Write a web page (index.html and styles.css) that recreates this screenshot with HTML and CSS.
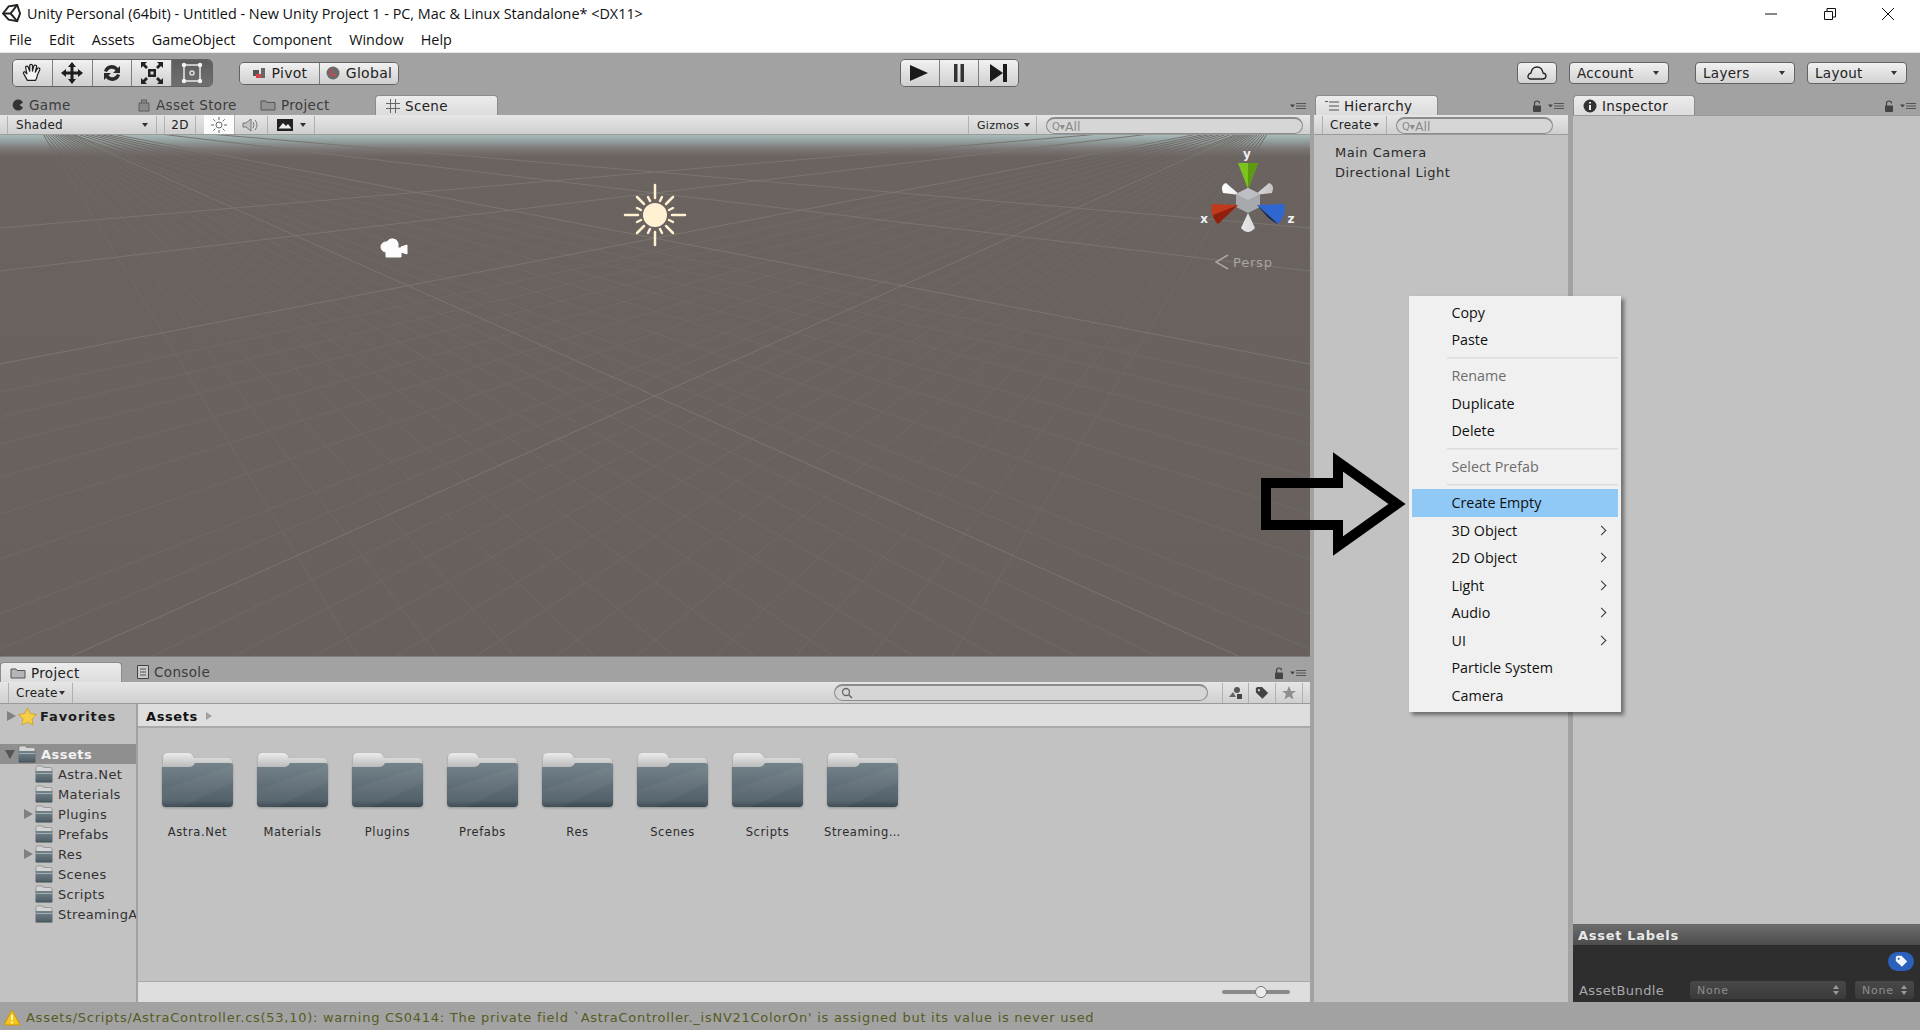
FILE: index.html
```html
<!DOCTYPE html>
<html lang="en">
<head>
    <meta charset="UTF-8">
    <title>Unity Personal (64bit) - Untitled - New Unity Project 1</title>
    <link rel="stylesheet" href="styles.css">
</head>
<body>
    <!-- shared icons -->
    <svg class="sprite" width="0" height="0">
        <defs>
            <linearGradient id="folderBody" x1="0" y1="0" x2="0" y2="1">
                <stop offset="0" stop-color="#74828a"/>
                <stop offset="0.85" stop-color="#53616a"/>
                <stop offset="1" stop-color="#3b4850"/>
            </linearGradient>
            <linearGradient id="folderPaper" x1="0" y1="0" x2="0" y2="1">
                <stop offset="0" stop-color="#ececec"/>
                <stop offset="1" stop-color="#b0b0b0"/>
            </linearGradient>
            <symbol id="folderBig" viewBox="0 0 71 56">
                <path d="M1 14V6q0-5 5-5h20q4 0 6 5h34q4 0 4 4v8H1z" fill="url(#folderPaper)"/>
                <path d="M0 15h27q4 0 6-4h35q3 0 3 3v37q0 4-4 4H4q-4 0-4-4z" fill="url(#folderBody)"/>
                <path d="M0 38 L71 13V30L20 55H4q-4 0-4-4z" fill="#fff" opacity="0.04"/>
            </symbol>
            <symbol id="folderSmall" viewBox="0 0 18 18">
                <path d="M1 6V2.500Q1 1 2.500 1h4.500q1 0 1.500 1.500h7Q17 2.500 17 4v3H1z" fill="#d4d4d4" stroke="#777" stroke-width="0.6"/>
                <path d="M0.500 6h17v10.500q0 1-1 1h-15q-1 0-1-1z" fill="url(#folderBody)"/>
                <path d="M1 8.500h16" stroke="#b4bcc0" stroke-width="0.8"/>
            </symbol>
            <symbol id="lock" viewBox="0 0 10 12">
                <path d="M2.500 6V3.500a2.500 2.500 0 0 1 5 0" fill="none" stroke="#444" stroke-width="1.200"/>
                <rect x="1" y="5.500" width="8" height="6.500" rx="0.800" fill="#444"/>
            </symbol>
            <symbol id="paneMenu" viewBox="0 0 16 8">
                <path d="M0 2.500h5L2.500 5.500z" fill="#444"/>
                <path d="M6 1.500h10M6 4h10M6 6.500h10" stroke="#555" stroke-width="1"/>
            </symbol>
            <symbol id="tag" viewBox="0 0 16 16">
                <path d="M1 2.500 2.500 1H8l7 7-6.500 6.500L1 7.500zM4.500 3.500a1.200 1.200 0 1 0 .01 0z" fill-rule="evenodd"/>
            </symbol>
            <symbol id="updown" viewBox="0 0 6 10">
                <path d="M3 0 6 4H0zM3 10 0 6h6z" fill="#9a9a9a"/>
            </symbol>
        </defs>
    </svg>

    <header class="titlebar">
        <svg class="unity-logo" viewBox="0 0 20 20" width="19" height="19">
            <path d="M1 10 7 2.500l9-1.500 3 9-3 8-9-1.500z" fill="none" stroke="#222" stroke-width="2"/>
            <path d="M1 10h8l7-9M9 10l7 8" fill="none" stroke="#222" stroke-width="2"/>
        </svg>
        <span class="title-text">Unity Personal (64bit) - Untitled - New Unity Project 1 - PC, Mac &amp; Linux Standalone* &lt;DX11&gt;</span>
        <div class="window-controls">
            <svg viewBox="0 0 12 12" width="12" height="12"><path d="M0 6h12" stroke="#111" stroke-width="1"/></svg>
            <svg viewBox="0 0 12 12" width="12" height="12"><path d="M.5 3.500h8v8h-8zM3 3.500V.5h8.500V9H8.500" fill="none" stroke="#111" stroke-width="1"/></svg>
            <svg viewBox="0 0 12 12" width="12" height="12"><path d="M0 0l12 12M12 0 0 12" stroke="#111" stroke-width="1"/></svg>
        </div>
    </header>

    <nav class="menubar">
        <span>File</span><span>Edit</span><span>Assets</span><span>GameObject</span><span>Component</span><span>Window</span><span>Help</span>
    </nav>

    <!-- main toolbar -->
    <div class="toolbar">
        <div class="toolbar-left">
            <div class="btn-group tools">
                <button class="tool-btn">
                    <svg viewBox="0 0 24 24" width="22" height="22"><path d="M7 20 3 13q-1-2 1-2.500l2.500 2.500L5 6q0-1.500 1.500-1.500T8 6l1.500 4V4q0-1.500 1.500-1.500T12.500 4v6L14 4.500q.5-1.500 2-1T17 5l-1.500 6 2.500-4q1-1 2-.3t.5 1.800L18 14q-1 4-2 6z" fill="#f4f4f4" stroke="#222" stroke-width="1.300" stroke-linejoin="round"/></svg>
                </button>
                <button class="tool-btn">
                    <svg viewBox="0 0 24 24" width="24" height="24"><path d="M12 1l4 5h-2.500v4.500H18V8l5 4-5 4v-2.500h-4.500V18H16l-4 5-4-5h2.500v-4.500H6V16l-5-4 5-4v2.500h4.500V6H8z" fill="#1d1d1d"/></svg>
                </button>
                <button class="tool-btn">
                    <svg viewBox="0 0 24 24" width="24" height="24"><path d="M4 10a8 8 0 0 1 14-3l2-2v7h-7l2.500-2.500A5 5 0 0 0 7 11zM20 14a8 8 0 0 1-14 3l-2 2v-7h7l-2.500 2.500A5 5 0 0 0 17 13z" fill="#2a2a2a"/></svg>
                </button>
                <button class="tool-btn">
                    <svg viewBox="0 0 24 24" width="24" height="24"><path d="M8 8h8v8H8zM10.500 10.500v3h3v-3z" fill="#222" fill-rule="evenodd"/><path d="M1 7V1h6L5 3l3 3-2 2-3-3zM23 7V1h-6l2 2-3 3 2 2 3-3zM1 17v6h6l-2-2 3-3-2-2-3 3zM23 17v6h-6l2-2-3-3 2-2 3 3z" fill="#222"/></svg>
                </button>
                <button class="tool-btn tool-on">
                    <svg viewBox="0 0 24 24" width="24" height="24"><path d="M4 4h16v16H4z" fill="none" stroke="#e8e8e8" stroke-width="1.500"/><circle cx="12" cy="12" r="2" fill="none" stroke="#ddd" stroke-width="1.500"/><circle cx="4" cy="4" r="2.200" fill="#f4f4f4"/><circle cx="20" cy="4" r="2.200" fill="#f4f4f4"/><circle cx="4" cy="20" r="2.200" fill="#f4f4f4"/><circle cx="20" cy="20" r="2.200" fill="#f4f4f4"/></svg>
                </button>
            </div>
            <div class="btn-group pivot">
                <button class="text-btn btn-pivot">
                    <svg viewBox="0 0 14 14" width="14" height="14"><path d="M1 4h6v6H1z" fill="#555"/><path d="M9 2h4v10H9z" fill="#666"/><path d="M4 8h5v4H4z" fill="#d8404a"/></svg>
                    Pivot
                </button>
                <button class="text-btn btn-global">
                    <svg viewBox="0 0 14 14" width="14" height="14"><circle cx="7" cy="7" r="6.500" fill="#6b6b6b"/><path d="M5 3v6h5" fill="none" stroke="#d8404a" stroke-width="1.600"/></svg>
                    Global
                </button>
            </div>
        </div>
        <div class="btn-group play">
            <button class="play-btn"><svg viewBox="0 0 20 20" width="20" height="20"><path d="M0 2l18 8-18 8z" fill="#1a1a1a"/></svg></button>
            <button class="play-btn"><svg viewBox="0 0 20 20" width="20" height="20"><path d="M5 1h3.500v18H5zM11.500 1H15v18h-3.500z" fill="#333"/></svg></button>
            <button class="play-btn"><svg viewBox="0 0 20 20" width="20" height="20"><path d="M1 1l13 9-13 9zM14 1h4v18h-4z" fill="#1a1a1a"/></svg></button>
        </div>
        <div class="toolbar-right">
            <button class="plain-btn btn-cloud">
                <svg viewBox="0 0 20 16" width="20" height="16"><path d="M3 14q-2.500-.5-2-3t3-3q1-6 6-6t6 6q3 .5 3 3t-3 3z" fill="none" stroke="#222" stroke-width="1.300"/></svg>
            </button>
            <button class="plain-btn drop-btn btn-account">Account<i class="caret"></i></button>
            <button class="plain-btn drop-btn btn-layers">Layers<i class="caret"></i></button>
            <button class="plain-btn drop-btn btn-layout">Layout<i class="caret"></i></button>
        </div>
    </div>

    <main class="workspace">
        <div class="left-column">
            <!-- scene -->
            <section class="scene-panel">
                <div class="tabbar">
                    <div class="tab tab-game">
                        <svg viewBox="0 0 12 12" width="12" height="12"><path d="M11 3.500A5.500 5.500 0 1 0 11 8.500L7.500 6z" fill="#333"/></svg>
                        Game
                    </div>
                    <div class="tab tab-store">
                        <svg viewBox="0 0 14 14" width="14" height="14"><path d="M2 5h10v8H2zM4.500 5V2h5v3" fill="#8a8a8a" stroke="#5e5e5e"/></svg>
                        Asset Store
                    </div>
                    <div class="tab tab-project">
                        <svg viewBox="0 0 16 14" width="16" height="14"><path d="M1 12V3h5l1 1.500h8V12z" fill="#929292" stroke="#555"/></svg>
                        Project
                    </div>
                    <div class="tab tab-on tab-scene">
                        <svg viewBox="0 0 14 14" width="14" height="14"><path d="M4.500 0v14M9.500 0v14M0 4.500h14M0 9.500h14" stroke="#666" stroke-width="1"/></svg>
                        Scene
                    </div>
                    <svg class="pane-menu" width="16" height="8"><use href="#paneMenu"/></svg>
                </div>
                <div class="panel-toolbar">
                    <div class="tb-drop tb-shaded">Shaded<i class="caret"></i></div>
                    <div class="tb-cell tb-2d">2D</div>
                    <div class="tb-cell tb-light">
                        <svg viewBox="0 0 16 16" width="16" height="16"><circle cx="8" cy="8" r="3" fill="none" stroke="#666"/><path d="M8 0v3M8 13v3M0 8h3M13 8h3M2.300 2.300l2 2M11.700 11.700l2 2M13.700 2.300l-2 2M4.300 11.700l-2 2" stroke="#666"/></svg>
                    </div>
                    <div class="tb-cell tb-audio">
                        <svg viewBox="0 0 18 16" width="18" height="16"><path d="M1 6h3l5-4v12l-5-4H1z" fill="#c4c4c4" stroke="#777"/><path d="M11 5q2 3 0 6M13 3q4 5 0 10" fill="none" stroke="#777"/></svg>
                    </div>
                    <div class="tb-cell tb-image">
                        <svg viewBox="0 0 16 14" width="16" height="14"><path d="M0 1h16v12H0z" fill="#222"/><path d="M1.500 10.500 6 5l3 3 2-2 3.500 4.500z" fill="#eee"/></svg>
                        <i class="caret"></i>
                    </div>
                    <div class="tb-fill"></div>
                    <div class="tb-drop tb-gizmos">Gizmos<i class="caret"></i></div>
                    <div class="search search-scene"><span class="search-q">Q▾</span>All</div>
                </div>
                <div class="scene-view">
                    <svg class="scene-canvas" viewBox="0 0 1310 522" width="1310" height="522">
                        <defs>
                            <linearGradient id="gizCone" x1="0" y1="0" x2="1" y2="0">
                                <stop offset="0" stop-color="#fff"/>
                                <stop offset="1" stop-color="#c4c4c4"/>
                            </linearGradient>
                        </defs>
                        <!-- ground grid, two fans that meet above the horizon -->
                        <g class="scene-grid">
                            <path d="M1276-16 0 257M1276-16 0 282M1276-16 0 309M1276-16 0 342M1276-16 0 379M1276-16 0 424M1276-16 0 479M1276-16 0 514M1276-16 0 594M1276-16 0 642M1276-16 0 697M1276-16 0 763M1276-16 0 841M1276-16 0 935M1276-16 0 1055M1276-16 0 1207M1276-16 0 1410M1276-16 0 1681M1276-16 0 2101"/>
                            <path d="M34-16 1310 257M34-16 1310 282M34-16 1310 309M34-16 1310 342M34-16 1310 379M34-16 1310 424M34-16 1310 479M34-16 1310 514M34-16 1310 594M34-16 1310 642M34-16 1310 697M34-16 1310 763M34-16 1310 841M34-16 1310 935M34-16 1310 1055M34-16 1310 1207M34-16 1310 1410M34-16 1310 1681M34-16 1310 2101"/>
                            <path class="scene-grid-major" d="M1276-16 0 93M1276-16 0 136M1276-16 0 229M1276-16 0 553M34-16 1310 93M34-16 1310 136M34-16 1310 229M34-16 1310 553"/>
                        </g>
                        <!-- sun -->
                        <g class="sun" transform="translate(655 80)">
                            <circle r="12"/>
                            <path d="M0-30V-17M0 30V17M-30 0H-17M30 0H17M-18-18-11-11M18-18 11-11M-18 18-11 11M18 18 11 11"/>
                            <path d="M-7-18-5-14M7-18 5-14M-7 18-5 14M7 18 5 14M-18-7-14-5M-18 7-14 5M18-7 14-5M18 7 14 5" class="sun-short"/>
                        </g>
                        <!-- camera -->
                        <path d="M381 112a5 5 0 0 1 6-5 6 6 0 0 1 11 1v5l3 0 0-1 6-2 0 9-6-2v5h-15v-5a5 5 0 0 1-5-5z" fill="#fdfdfd" stroke="#fdfdfd" stroke-linejoin="round"/>
                        <!-- gizmo -->
                        <g>
                            <text x="1247" y="23" class="giz-label">y</text>
                            <path d="M1238 28h20l-10 26z" fill="#7bc31f"/>
                            <path d="M1248 28h10l-10 26z" fill="#5c9a12"/>
                            <path d="M1240 60 1226 48q-6 2-3 10zM1255 60 1269 48q6 2 3 10zM1248 78l7 15q-7 8-14 0z" fill="url(#gizCone)"/>
                            <path d="M1248 53l12 6v13l-12 6-12-6V59z" fill="#a7a9ac"/>
                            <path d="M1248 53l12 6-12 6-12-6z" fill="#bdbfc2"/>
                            <path d="M1238 70 1212 69q-3 10 6 20z" fill="#c03a1b"/>
                            <path d="M1238 70 1218 89q-5-5-5-9z" fill="#8f200e"/>
                            <path d="M1257 70 1284 69q3 10-6 20z" fill="#2f66d0"/>
                            <path d="M1257 70 1278 89q-9-4-14-11z" fill="#16294f"/>
                            <text x="1204" y="88" class="giz-label">x</text>
                            <text x="1291" y="88" class="giz-label">z</text>
                            <path d="M1228 120l-12 7 12 7" fill="none" stroke="#a9a5a2" stroke-width="1.500"/>
                            <text x="1233" y="132" class="giz-persp">Persp</text>
                        </g>
                    </svg>
                </div>
            </section>

            <!-- project browser -->
            <section class="project-panel">
                <div class="tabbar tabbar-low">
                    <div class="tab tab-on tab-proj-on">
                        <svg viewBox="0 0 16 14" width="16" height="14"><path d="M1 12V3h5l1 1.500h8V12z" fill="#b5b5b5" stroke="#555"/></svg>
                        Project
                    </div>
                    <div class="tab tab-console">
                        <svg viewBox="0 0 12 14" width="12" height="14"><path d="M.5.500h11v13H.5z" fill="#c9c9c9" stroke="#444"/><path d="M3 4h6M3 7h6M3 10h6" stroke="#555"/></svg>
                        Console
                    </div>
                    <svg class="pane-lock" width="10" height="12"><use href="#lock"/></svg>
                    <svg class="pane-menu" width="16" height="8"><use href="#paneMenu"/></svg>
                </div>
                <div class="panel-toolbar panel-toolbar-project">
                    <div class="tb-drop tb-create">Create<i class="caret"></i></div>
                    <div class="tb-fill"></div>
                    <div class="search search-project">
                        <svg viewBox="0 0 12 12" width="12" height="12"><circle cx="5" cy="5" r="3.500" fill="none" stroke="#666" stroke-width="1.300"/><path d="M7.500 7.500 11 11" stroke="#666" stroke-width="1.500"/></svg>
                    </div>
                    <div class="tb-cell tb-icon tb-first">
                        <svg viewBox="0 0 14 14" width="14" height="14"><circle cx="8" cy="4" r="3" fill="#555"/><path d="M0 11l4-5 3 5z" fill="#666"/><path d="M8 8h5v5H8z" fill="#444"/></svg>
                    </div>
                    <div class="tb-cell tb-icon">
                        <svg width="14" height="14" class="tag-dark"><use href="#tag"/></svg>
                    </div>
                    <div class="tb-cell tb-icon">
                        <svg viewBox="0 0 14 14" width="14" height="14"><path d="M7 0l2 5h5l-4 3 1.500 5.500L7 10.500 2.500 13.500 4 8 0 5h5z" fill="#8e8e8e"/></svg>
                    </div>
                </div>
                <div class="project-body">
                    <aside class="tree">
                        <div class="tree-row tree-fav">
                            <i class="arrow-right"></i>
                            <svg viewBox="0 0 20 20" width="19" height="19"><path d="M10 1l3 6 6.500 1-4.700 4.500L16 19l-6-3-6 3 1.200-6.500L.5 8 7 7z" fill="#f7cf45" stroke="#c99a1d" stroke-width="0.800"/></svg>
                            <b>Favorites</b>
                        </div>
                        <div class="tree-row tree-root">
                            <i class="arrow-down"></i>
                            <svg width="18" height="18"><use href="#folderSmall"/></svg>
                            <b>Assets</b>
                        </div>
                        <div class="tree-row tree-item"><svg width="18" height="18"><use href="#folderSmall"/></svg>Astra.Net</div>
                        <div class="tree-row tree-item"><svg width="18" height="18"><use href="#folderSmall"/></svg>Materials</div>
                        <div class="tree-row tree-item"><i class="arrow-right arrow-sub"></i><svg width="18" height="18"><use href="#folderSmall"/></svg>Plugins</div>
                        <div class="tree-row tree-item"><svg width="18" height="18"><use href="#folderSmall"/></svg>Prefabs</div>
                        <div class="tree-row tree-item"><i class="arrow-right arrow-sub"></i><svg width="18" height="18"><use href="#folderSmall"/></svg>Res</div>
                        <div class="tree-row tree-item"><svg width="18" height="18"><use href="#folderSmall"/></svg>Scenes</div>
                        <div class="tree-row tree-item"><svg width="18" height="18"><use href="#folderSmall"/></svg>Scripts</div>
                        <div class="tree-row tree-item"><svg width="18" height="18"><use href="#folderSmall"/></svg>StreamingAssets</div>
                    </aside>
                    <div class="browser">
                        <div class="breadcrumb"><b>Assets</b><i class="arrow-crumb"></i></div>
                        <div class="folder-grid">
                            <div class="folder"><svg width="71" height="56"><use href="#folderBig"/></svg><span>Astra.Net</span></div>
                            <div class="folder"><svg width="71" height="56"><use href="#folderBig"/></svg><span>Materials</span></div>
                            <div class="folder"><svg width="71" height="56"><use href="#folderBig"/></svg><span>Plugins</span></div>
                            <div class="folder"><svg width="71" height="56"><use href="#folderBig"/></svg><span>Prefabs</span></div>
                            <div class="folder"><svg width="71" height="56"><use href="#folderBig"/></svg><span>Res</span></div>
                            <div class="folder"><svg width="71" height="56"><use href="#folderBig"/></svg><span>Scenes</span></div>
                            <div class="folder"><svg width="71" height="56"><use href="#folderBig"/></svg><span>Scripts</span></div>
                            <div class="folder"><svg width="71" height="56"><use href="#folderBig"/></svg><span>Streaming…</span></div>
                        </div>
                        <div class="browser-foot">
                            <div class="zoom-slider"><i class="zoom-knob"></i></div>
                        </div>
                    </div>
                </div>
            </section>
        </div>

        <!-- hierarchy -->
        <section class="hierarchy-panel">
            <div class="tabbar">
                <div class="tab tab-on tab-hier">
                    <svg viewBox="0 0 14 12" width="14" height="12"><path d="M0 1.500h3M4 2h10M4 6h10M4 10h10" stroke="#555"/></svg>
                    Hierarchy
                </div>
                <svg class="pane-lock" width="10" height="12"><use href="#lock"/></svg>
                <svg class="pane-menu" width="16" height="8"><use href="#paneMenu"/></svg>
            </div>
            <div class="panel-toolbar">
                <div class="tb-drop tb-create-h">Create<i class="caret"></i></div>
                <div class="search search-hier"><span class="search-q">Q▾</span>All</div>
            </div>
            <ul class="hier-list">
                <li>Main Camera</li>
                <li>Directional Light</li>
            </ul>
        </section>

        <!-- inspector -->
        <section class="inspector-panel">
            <div class="tabbar">
                <div class="tab tab-on tab-insp">
                    <svg viewBox="0 0 14 14" width="14" height="14"><circle cx="7" cy="7" r="6.500" fill="#333"/><path d="M7 3v1.500M7 6v5" stroke="#eee" stroke-width="2"/></svg>
                    Inspector
                </div>
                <svg class="pane-lock" width="10" height="12"><use href="#lock"/></svg>
                <svg class="pane-menu" width="16" height="8"><use href="#paneMenu"/></svg>
            </div>
            <div class="inspector-body"></div>
            <div class="labels-head">Asset Labels</div>
            <div class="labels-body">
                <div class="tag-row"><span class="tag-pill"><svg width="13" height="13"><use href="#tag"/></svg></span></div>
                <div class="bundle-row">
                    <span class="bundle-label">AssetBundle</span>
                    <span class="bundle-select bundle-wide">None<svg width="6" height="10"><use href="#updown"/></svg></span>
                    <span class="bundle-select bundle-small">None<svg width="6" height="10"><use href="#updown"/></svg></span>
                </div>
            </div>
        </section>
    </main>

    <footer class="statusbar">
        <svg viewBox="0 0 18 17" width="18" height="17"><path d="M9 1l8 15H1z" fill="#f5c518" stroke="#c79a10" stroke-linejoin="round"/><path d="M9 6v5M9 12.500v2" stroke="#fff8d8" stroke-width="1.800"/></svg>
        <span>Assets/Scripts/AstraController.cs(53,10): warning CS0414: The private field `AstraController._isNV21ColorOn' is assigned but its value is never used</span>
    </footer>

    <!-- context menu + annotation arrow on top of everything -->
    <div class="context-menu">
        <div class="cm-item">Copy</div>
        <div class="cm-item">Paste</div>
        <div class="cm-sep"></div>
        <div class="cm-item cm-off">Rename</div>
        <div class="cm-item">Duplicate</div>
        <div class="cm-item">Delete</div>
        <div class="cm-sep"></div>
        <div class="cm-item cm-off">Select Prefab</div>
        <div class="cm-sep"></div>
        <div class="cm-item cm-on">Create Empty</div>
        <div class="cm-item cm-sub">3D Object</div>
        <div class="cm-item cm-sub">2D Object</div>
        <div class="cm-item cm-sub">Light</div>
        <div class="cm-item cm-sub">Audio</div>
        <div class="cm-item cm-sub">UI</div>
        <div class="cm-item">Particle System</div>
        <div class="cm-item">Camera</div>
    </div>
    <svg class="big-arrow" viewBox="0 0 146 106" width="146" height="106">
        <path d="M5 31H77V10L136 52 77 94V73H5z" fill="none" stroke="#000" stroke-width="10"/>
    </svg>
</body>
</html>
```

FILE: styles.css
```css
* {
    box-sizing: border-box;
}
html, body {
    margin: 0;
    height: 100%;
}
body {
    position: relative;
    display: flex;
    flex-direction: column;
    width: 1920px;
    height: 1030px;
    overflow: hidden;
    background: #a2a2a2;
    color: #222;
    font-family: "DejaVu Sans", sans-serif;
    font-size: 13px;
}
i {
    display: block;
    font-style: normal;
}
button {
    font-family: inherit;
    font-size: 13px;
    color: #222;
    padding: 0;
}
svg {
    flex: none;
    display: block;
}
.sprite {
    position: absolute;
}

/* title and menu */
.titlebar {
    display: flex;
    align-items: center;
    height: 26px;
    padding: 1px 0 0 2px;
    background: #fff;
    font-family: "Open Sans", sans-serif;
    font-size: 14.400px;
    color: #111;
}
.unity-logo {
    margin-right: 6px;
}
.title-text {
    white-space: nowrap;
}
.window-controls {
    display: flex;
    gap: 46.500px;
    margin-left: auto;
    padding-right: 26px;
}
.menubar {
    display: flex;
    align-items: center;
    gap: 17.200px;
    height: 27px;
    padding: 1px 0 0 9px;
    background: #fff;
    font-family: "Open Sans", sans-serif;
    font-size: 14.400px;
    color: #111;
    border-bottom: 1px solid #e6e6e6;
}

/* main toolbar */
.toolbar {
    display: grid;
    grid-template-columns: 1fr auto 1fr;
    align-items: center;
    height: 40px;
    padding: 0 13px 0 12px;
    background: #a2a2a2;
}
.toolbar-left {
    display: flex;
    align-items: center;
    gap: 26px;
}
.toolbar-right {
    display: flex;
    justify-content: flex-end;
    align-items: center;
}
.btn-group {
    display: flex;
    border: 1px solid #636363;
    border-radius: 5px;
    overflow: hidden;
}
.tools, .play {
    height: 28px;
}
.tool-btn, .play-btn, .text-btn {
    display: flex;
    align-items: center;
    justify-content: center;
    border: 0;
    border-right: 1px solid #7c7c7c;
    background: linear-gradient(#f1f1f1, #cfcfcf);
}
.tool-btn {
    width: 39.800px;
}
.tool-on {
    background: linear-gradient(#5e5e5e, #707070);
    border-right: 0;
}
.play-btn {
    width: 39px;
}
.play-btn:last-child, .text-btn:last-child {
    border-right: 0;
}
.pivot {
    height: 23px;
}
.text-btn {
    gap: 6px;
    height: 100%;
    font-size: 14px;
    letter-spacing: 0.3px;
}
.btn-pivot {
    width: 80px;
}
.btn-global {
    width: 78px;
}
.plain-btn {
    display: flex;
    align-items: center;
    height: 22px;
    border: 1px solid #636363;
    border-radius: 4px;
    background: linear-gradient(#f1f1f1, #d2d2d2);
    font-size: 13.500px;
    letter-spacing: 0.3px;
}
.btn-cloud {
    justify-content: center;
    width: 40px;
    margin-right: 12px;
}
.drop-btn {
    justify-content: space-between;
    width: 100px;
    padding: 0 9px 0 7px;
}
.btn-layers {
    margin-left: 26px;
}
.btn-layout {
    margin-left: 12px;
}
.caret {
    width: 0;
    height: 0;
    border-left: 3px solid transparent;
    border-right: 3px solid transparent;
    border-top: 4px solid #333;
}

/* layout of the panels */
.workspace {
    flex: 1;
    display: flex;
    min-height: 0;
}
.left-column {
    display: flex;
    flex-direction: column;
    width: 1310px;
    margin-right: 4px;
}
.scene-panel {
    flex: none;
}
.project-panel {
    flex: 1;
    display: flex;
    flex-direction: column;
    min-height: 0;
    margin-top: 4px;
}
.hierarchy-panel {
    display: flex;
    flex-direction: column;
    width: 254px;
    margin-right: 5px;
    background: #a2a2a2;
}
.inspector-panel {
    flex: 1;
    display: flex;
    flex-direction: column;
}

/* tabs */
.tabbar {
    display: flex;
    align-items: flex-end;
    height: 22px;
    background: #a2a2a2;
    font-size: 13.500px;
}
.tabbar-low {
    height: 21px;
}
.tab {
    display: flex;
    align-items: center;
    gap: 5px;
    height: 20px;
    color: #3c3c3c;
    letter-spacing: 0.35px;
    white-space: nowrap;
}
.tab-on {
    background: linear-gradient(#ececec, #dcdcdc);
    border: 1px solid #8b8b8b;
    border-bottom: 0;
    border-radius: 4px 4px 0 0;
    color: #222;
}
.tab-game {
    width: 125px;
    margin-left: 12px;
}
.tab-store {
    width: 123px;
}
.tab-project {
    width: 115px;
}
.tab-scene {
    width: 123px;
    padding-left: 10px;
}
.tab-proj-on {
    width: 122px;
    padding-left: 9px;
}
.tab-console {
    width: 150px;
    margin-left: 15px;
}
.tab-hier {
    width: 123px;
    margin-left: 1px;
    padding-left: 9px;
}
.tab-insp {
    width: 122px;
    padding-left: 9px;
}
.pane-lock {
    margin: 0 3px 3px auto;
}
.pane-menu {
    margin: 0 4px 5px 3px;
}
.tab-scene + .pane-menu {
    margin-left: auto;
}

/* panel toolbars */
.panel-toolbar {
    display: flex;
    align-items: stretch;
    height: 20px;
    padding-top: 1px;
    background: linear-gradient(#e6e6e6, #cfcfcf);
    border-bottom: 1px solid #9a9a9a;
    font-size: 12px;
    color: #222;
}
.panel-toolbar-project {
    height: 22px;
}
.tb-drop, .tb-cell {
    display: flex;
    align-items: center;
    border-right: 1px solid #b0b0b0;
    letter-spacing: 0.3px;
}
.tb-drop {
    justify-content: space-between;
}
.tb-cell {
    justify-content: center;
}
.tb-shaded {
    width: 150px;
    margin-left: 7px;
    padding: 0 8px;
    border-left: 1px solid #b0b0b0;
}
.tb-2d {
    width: 32px;
    margin-left: 7px;
    border-left: 1px solid #b0b0b0;
}
.tb-light {
    width: 31px;
    margin: -1px 0 0 8px;
    background: #fbfbfb;
}
.tb-audio {
    width: 33px;
}
.tb-image {
    gap: 7px;
    width: 47px;
}
.tb-fill {
    flex: 1;
}
.tb-gizmos {
    width: 69px;
    padding: 0 6px 0 8px;
    border-left: 1px solid #b0b0b0;
    font-size: 11px;
}
.tb-create, .tb-create-h {
    width: 65px;
    margin-left: 8px;
    padding: 0 7px;
    border-left: 1px solid #b0b0b0;
}
.search {
    display: flex;
    align-items: center;
    height: 17px;
    margin-top: 1px;
    border: 1px solid #8c8c8c;
    border-top-width: 2px;
    border-radius: 9px;
    background: #d6d6d6;
    color: #8a8a8a;
    font-size: 12.500px;
    padding-left: 5px;
}
.search-q {
    font-size: 10px;
}
.search-scene {
    width: 257px;
    margin: 1px 7px 0 9px;
}
.search-hier {
    width: 157px;
    margin-left: 9px;
}
.search-project {
    width: 374px;
    margin-right: 14px;
    padding-left: 6px;
}
.tb-icon {
    width: 27px;
}
.tb-first {
    border-left: 1px solid #b0b0b0;
}
.tb-icon:last-child {
    margin-right: 7px;
}
.tag-dark {
    fill: #444;
}

/* scene view */
.scene-view {
    height: 522px;
    background: linear-gradient(#a9baba 0, #93a0a0 6px, #7a7674 14px, #6b635f 22px, #68605c 100%);
    border-bottom: 1px solid #807c7a;
    overflow: hidden;
}
.scene-grid {
    fill: none;
    stroke: #6f6a65;
    stroke-width: 1;
}
.scene-grid-major {
    stroke: #79756f;
}
.sun circle {
    fill: #fff1d2;
}
.sun path {
    fill: none;
    stroke: #fff1d2;
    stroke-width: 2.500;
    stroke-linecap: round;
}
.giz-label {
    fill: #f2f2f2;
    font-size: 12px;
    font-weight: bold;
    text-anchor: middle;
}
.giz-persp {
    fill: #a9a5a2;
    font-size: 13px;
    letter-spacing: 0.8px;
}

/* project browser */
.project-body {
    flex: 1;
    display: flex;
    min-height: 0;
    background: #c2c2c2;
}
.tree {
    width: 138px;
    padding-top: 2px;
    border-right: 2px solid #a2a2a2;
    overflow: hidden;
    font-size: 13px;
    color: #333;
    letter-spacing: 0.35px;
}
.tree-row {
    position: relative;
    display: flex;
    align-items: center;
    height: 20px;
    white-space: nowrap;
}
.tree-row b {
    letter-spacing: 0.5px;
    margin-left: 5px;
}
.tree-fav {
    padding-left: 18px;
    margin-bottom: 18px;
    color: #1c1c1c;
}
.tree-fav b {
    margin-left: 3px;
    letter-spacing: 0.9px;
}
.tree-root {
    padding-left: 18px;
    background: #8f8f8f;
    color: #f2f2f2;
}
.tree-item {
    padding-left: 35px;
}
.tree-item svg {
    margin-right: 5px;
}
.arrow-right, .arrow-down {
    position: absolute;
    top: 5px;
    left: 7px;
    width: 0;
    height: 0;
}
.arrow-right {
    border-top: 5px solid transparent;
    border-bottom: 5px solid transparent;
    border-left: 9px solid #818181;
}
.arrow-down {
    left: 5px;
    top: 6px;
    border-left: 5px solid transparent;
    border-right: 5px solid transparent;
    border-top: 9px solid #555;
}
.arrow-sub {
    left: 24px;
}
.browser {
    flex: 1;
    display: flex;
    flex-direction: column;
}
.breadcrumb {
    display: flex;
    align-items: center;
    height: 24px;
    padding: 2px 0 0 8px;
    background: #dedede;
    border-bottom: 2px solid #a9a9a9;
    font-size: 13px;
    letter-spacing: 0.6px;
    color: #111;
}
.arrow-crumb {
    width: 0;
    height: 0;
    margin-left: 8px;
    border-top: 4px solid transparent;
    border-bottom: 4px solid transparent;
    border-left: 6px solid #a0a0a0;
}
.folder-grid {
    flex: 1;
    display: flex;
    padding: 24px 0 0 12px;
}
.folder {
    display: flex;
    flex-direction: column;
    align-items: center;
    width: 95px;
    font-size: 11.500px;
    letter-spacing: 0.6px;
    color: #2c2c2c;
}
.folder svg {
    margin-bottom: 17px;
    filter: drop-shadow(0 1px 1px rgba(0, 0, 0, 0.25));
}
.browser-foot {
    display: flex;
    align-items: center;
    height: 21px;
    padding-left: 1084px;
    background: #dedede;
    border-top: 1px solid #a9a9a9;
}
.zoom-slider {
    position: relative;
    width: 68px;
    height: 4px;
    border-radius: 2px;
    background: #8a8a8a;
}
.zoom-knob {
    position: absolute;
    top: -4px;
    left: 33px;
    width: 12px;
    height: 12px;
    border: 1px solid #777;
    border-radius: 50%;
    background: #ececec;
}

/* hierarchy */
.hier-list {
    flex: 1;
    margin: 0;
    padding: 8px 0 0 21px;
    list-style: none;
    background: #c2c2c2;
    font-size: 13px;
    letter-spacing: 0.5px;
    line-height: 20px;
    color: #2a2a2a;
}

/* inspector */
.inspector-body {
    flex: 1;
    background: #c2c2c2;
}
.inspector-panel .tabbar {
    border-bottom: 1px solid #999;
    height: 23px;
}
.labels-head {
    display: flex;
    align-items: center;
    height: 21px;
    padding-left: 5px;
    background: linear-gradient(#6c6c6c, #4c4c4c);
    border-top: 1px solid #666;
    color: #e8e8e8;
    font-size: 13px;
    font-weight: bold;
    letter-spacing: 0.7px;
}
.labels-body {
    height: 57px;
    padding: 7px 6px 0 6px;
    background: #2e2e2e;
    color: #a9a9a9;
}
.tag-row {
    display: flex;
    justify-content: flex-end;
    height: 19px;
}
.tag-pill {
    display: flex;
    align-items: center;
    justify-content: center;
    width: 26px;
    height: 19px;
    border-radius: 10px;
    background: #2b60bb;
    fill: #f4f7ff;
}
.bundle-row {
    display: flex;
    align-items: center;
    margin-top: 10px;
}
.bundle-label {
    width: 111px;
    font-size: 13px;
    letter-spacing: 0.4px;
}
.bundle-select {
    display: flex;
    align-items: center;
    justify-content: space-between;
    height: 18px;
    padding: 0 7px;
    border-radius: 3px;
    background: linear-gradient(#484848, #3b3b3b);
    font-size: 11px;
    letter-spacing: 0.8px;
    color: #8d8d8d;
}
.bundle-wide {
    width: 156px;
    margin-right: 9px;
}
.bundle-small {
    width: 59px;
}

/* status bar */
.statusbar {
    display: flex;
    align-items: center;
    gap: 5px;
    height: 28px;
    padding: 3px 0 0 3px;
    background: #a2a2a2;
    color: #565c22;
    font-size: 13px;
    letter-spacing: 0.73px;
    white-space: nowrap;
}

/* context menu */
.context-menu {
    position: absolute;
    left: 1409px;
    top: 296px;
    width: 212px;
    padding: 2.500px 3px 3px;
    background: #f0f0f0;
    box-shadow: 3px 3px 4px rgba(0, 0, 0, 0.45);
    font-family: "Open Sans", sans-serif;
    font-size: 14.300px;
    color: #111;
}
.cm-item {
    position: relative;
    height: 27.500px;
    padding-left: 39.500px;
    line-height: 27px;
    white-space: nowrap;
}
.cm-off {
    color: #6d6d6d;
}
.cm-on {
    background: #90c8f6;
}
.cm-sub::after {
    content: "";
    position: absolute;
    right: 13px;
    top: 10px;
    width: 6px;
    height: 6px;
    border-top: 1px solid #333;
    border-right: 1px solid #333;
    transform: rotate(45deg);
}
.cm-sep {
    height: 8.600px;
    margin-left: 35px;
    background: linear-gradient(#dcdcdc, #dcdcdc) center / 100% 1.500px no-repeat;
}

/* the black annotation arrow */
.big-arrow {
    position: absolute;
    left: 1261px;
    top: 452px;
}
```
